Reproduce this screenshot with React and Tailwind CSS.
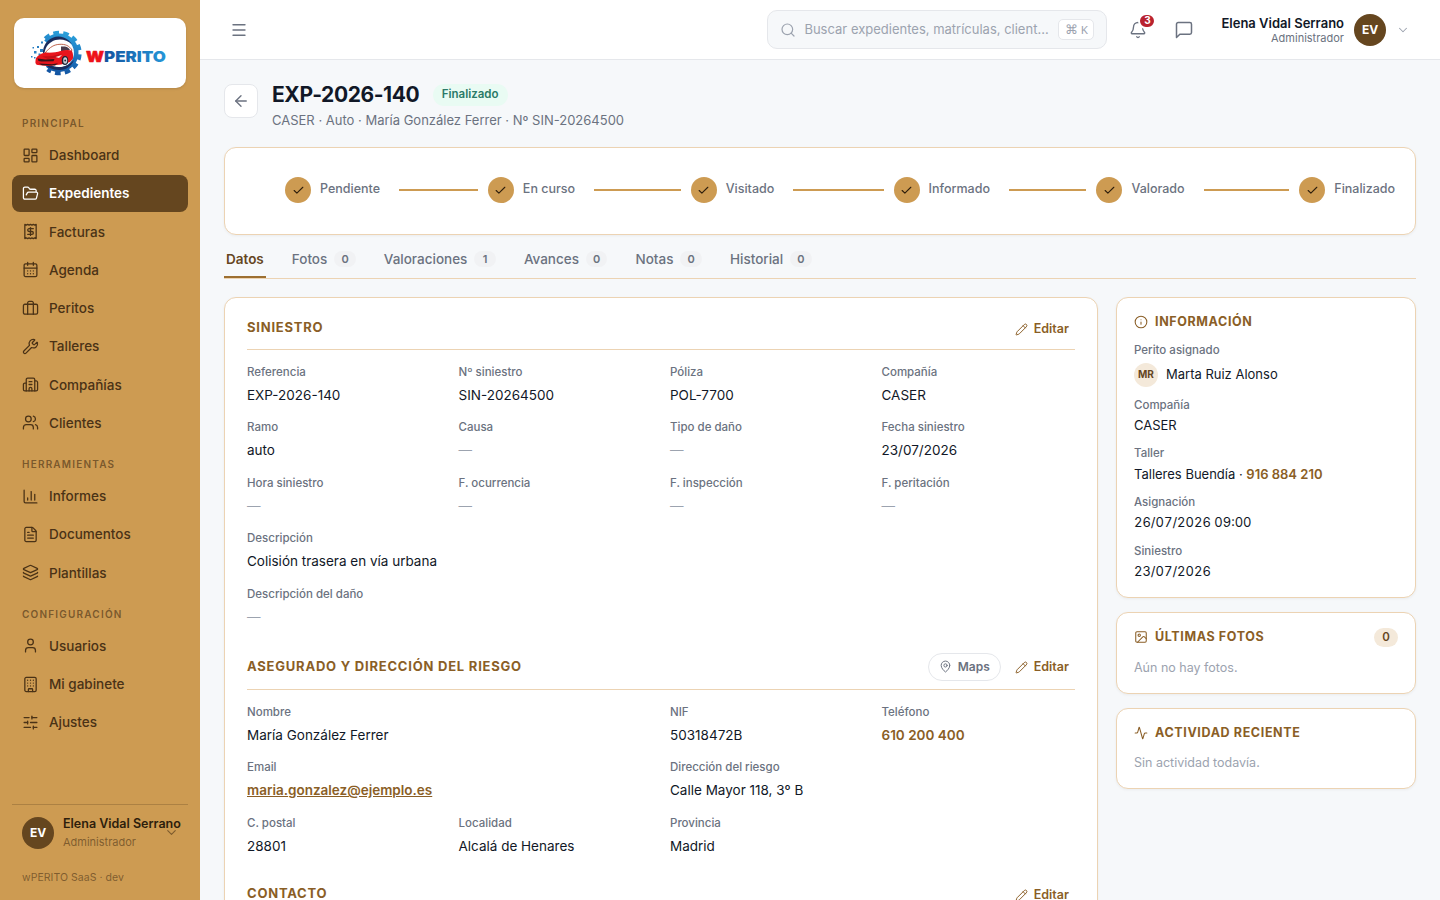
import {
  Activity,
  ArrowLeft,
  Bell,
  Briefcase,
  Building,
  Building2,
  CalendarDays,
  ChartColumn,
  Check,
  ChevronDown,
  FileText,
  FolderOpen,
  Image,
  Info,
  Layers,
  LayoutDashboard,
  MapPin,
  Menu,
  Pencil,
  Receipt,
  Search,
  SlidersHorizontal,
  User,
  Users,
  Wrench,
} from "lucide-react";

const menu = [
  {
    titulo: "Principal",
    items: [
      { label: "Dashboard", icon: LayoutDashboard },
      { label: "Expedientes", icon: FolderOpen, active: true },
      { label: "Facturas", icon: Receipt },
      { label: "Agenda", icon: CalendarDays },
      { label: "Peritos", icon: Briefcase },
      { label: "Talleres", icon: Wrench },
      { label: "Compañías", icon: Building2 },
      { label: "Clientes", icon: Users },
    ],
  },
  {
    titulo: "Herramientas",
    items: [
      { label: "Informes", icon: ChartColumn },
      { label: "Documentos", icon: FileText },
      { label: "Plantillas", icon: Layers },
    ],
  },
  {
    titulo: "Configuración",
    items: [
      { label: "Usuarios", icon: User },
      { label: "Mi gabinete", icon: Building },
      { label: "Ajustes", icon: SlidersHorizontal },
    ],
  },
];

const pasos = ["Pendiente", "En curso", "Visitado", "Informado", "Valorado", "Finalizado"];

const tabs = [
  { label: "Datos", active: true },
  { label: "Fotos", count: 0 },
  { label: "Valoraciones", count: 1 },
  { label: "Avances", count: 0 },
  { label: "Notas", count: 0 },
  { label: "Historial", count: 0 },
];

const siniestro = [
  { label: "Referencia", value: "EXP-2026-140" },
  { label: "Nº siniestro", value: "SIN-20264500" },
  { label: "Póliza", value: "POL-7700" },
  { label: "Compañía", value: "CASER" },
  { label: "Ramo", value: "auto" },
  { label: "Causa" },
  { label: "Tipo de daño" },
  { label: "Fecha siniestro", value: "23/07/2026" },
  { label: "Hora siniestro" },
  { label: "F. ocurrencia" },
  { label: "F. inspección" },
  { label: "F. peritación" },
  { label: "Descripción", value: "Colisión trasera en vía urbana", span: "col-span-4" },
  { label: "Descripción del daño", span: "col-span-4" },
];

const asegurado = [
  { label: "Nombre", value: "María González Ferrer", span: "col-span-2" },
  { label: "NIF", value: "50318472B" },
  { label: "Teléfono", value: "610 200 400", tipo: "tel" },
  { label: "Email", value: "maria.gonzalez@ejemplo.es", tipo: "email", span: "col-span-2" },
  { label: "Dirección del riesgo", value: "Calle Mayor 118, 3º B", span: "col-span-2" },
  { label: "C. postal", value: "28801" },
  { label: "Localidad", value: "Alcalá de Henares" },
  { label: "Provincia", value: "Madrid" },
];

function Logo() {
  return (
    <svg viewBox="0 0 172 70" className="h-[70px] w-[172px]">
      <defs>
        <linearGradient id="gear" gradientUnits="userSpaceOnUse" x1="40" y1="57" x2="52" y2="13">
          <stop offset="0" stopColor="#1152a0" />
          <stop offset="0.5" stopColor="#1d74bd" />
          <stop offset="1" stopColor="#2ba3dd" />
        </linearGradient>
        <linearGradient id="word" x1="0" y1="0" x2="1" y2="0">
          <stop offset="0" stopColor="#12529f" />
          <stop offset="1" stopColor="#2597d8" />
        </linearGradient>
      </defs>
      {/* engranaje: dientes, corona y filo interior */}
      <g fill="none" stroke="url(#gear)">
        <path d="M31.200 20.700A20.200 20.200 0 1 1 33.500 51.300" strokeWidth="4" strokeDasharray="5.600 4.100" />
        <path d="M32 24A17 17 0 1 1 33.500 47" strokeWidth="4.600" />
      </g>
      <path d="M29.500 38A15.500 15.500 0 0 1 58 26.500C50 18.500 36 20 31.500 31z" fill="#1b2c5c" />
      <path d="M29 44c4 5 9 8 16.500 8 7 0 12-4 14.500-10-4 4.500-9 7-15 7s-11-1.500-16-5z" fill="#1b2c5c" />
      <g fill="#2a7fc2">
        <rect x="23" y="28" width="2" height="2" />
        <rect x="18.500" y="29" width="1.500" height="1.500" />
        <rect x="20" y="33" width="2.500" height="2.500" />
        <rect x="26" y="31" width="3" height="3" />
        <rect x="17" y="38" width="1.500" height="1.500" />
        <rect x="27" y="23.500" width="2" height="2" />
        <rect x="24.500" y="35.500" width="2" height="2" />
        <rect x="20" y="39" width="1.500" height="1.500" />
      </g>
      {/* coche */}
      <path d="M31 35c5-6 9-8.500 15-8.700 5-.2 9 1.200 12 5.700l-3 5z" fill="#fff" stroke="#b5533a" strokeWidth="0.9" />
      <path d="M47 28.500h4c2.500.5 4 1.800 5 3.500l-9 1.500z" fill="#4a3b4a" />
      <path d="M21.500 43c0-4.500 4-7 10-8.500 5 .5 11 0 15-1.500 4-1 8-1.500 11-.5 1.500 2 1.800 4.500 1.500 8l-3 3.500-9 2.500-13 1.500-10-1c-2 0-3-2-2.500-4z" fill="#e8141c" />
      <path d="M28 38.500l11-.5 9-2.500-6 4-8 1.500z" fill="#c20f16" />
      <path d="M23.500 40.500l8 1 9-.5-1 2.200-12 .3-3-.5z" fill="#3a1418" />
      <path d="M25 45.500l13 .8 6-1-3 2.200-13-.2z" fill="#3a1418" />
      <path d="M41.500 39l6.500-2-3 3z" fill="#f7e9e6" />
      <ellipse cx="51" cy="42.500" rx="3.200" ry="4.600" fill="#1d2233" />
      <ellipse cx="51.200" cy="42.500" rx="2" ry="3.200" fill="#c9cdd6" />
      <circle cx="51.200" cy="42.500" r="0.900" fill="#1d2233" />
      <text
        x="72"
        y="43.500"
        fontFamily="Inter"
        fontWeight="900"
        fontSize="15"
        textLength="18"
        lengthAdjust="spacingAndGlyphs"
        fill="#ee1119"
        stroke="#ee1119"
        strokeWidth="0.6"
        strokeLinejoin="round"
      >
        W
      </text>
      <text
        x="90"
        y="43.500"
        fontFamily="Inter"
        fontWeight="900"
        fontSize="15"
        textLength="62"
        lengthAdjust="spacingAndGlyphs"
        fill="url(#word)"
      >
        PERITO
      </text>
    </svg>
  );
}

function Sidebar() {
  return (
    <aside className="flex w-[200px] shrink-0 flex-col bg-[#cd9b52] px-3 pt-[18px]">
      <div className="mx-0.5 h-[70px] shrink-0 overflow-hidden rounded-[10px] bg-white shadow-sm">
        <Logo />
      </div>
      <nav className="mt-3 flex flex-col">
        {menu.map((grupo) => (
          <div key={grupo.titulo}>
            <p className="px-2.5 pt-4 pb-1.5 text-[10px] leading-[15px] font-semibold tracking-[0.12em] text-[#4a3216]/65 uppercase">
              {grupo.titulo}
            </p>
            <div className="flex flex-col gap-0.5">
              {grupo.items.map((item) => (
                <a
                  key={item.label}
                  className={
                    item.active
                      ? "flex items-center gap-2.5 rounded-lg bg-[#65461f] px-2.5 py-2 text-[13.5px] leading-[1.5] font-semibold text-white"
                      : "flex items-center gap-2.5 rounded-lg px-2.5 py-2 text-[13.5px] leading-[1.5] font-medium text-[#4a3216]"
                  }
                >
                  <item.icon size={17} strokeWidth={1.8} />
                  {item.label}
                </a>
              ))}
            </div>
          </div>
        ))}
      </nav>
      <div className="mt-auto flex h-[58px] items-center border-t border-[#4a3216]/25 px-2.5 pb-0.5">
        <div className="flex size-8 shrink-0 items-center justify-center rounded-full bg-[#65461f] text-[12px] font-bold text-white">
          EV
        </div>
        <div className="ml-[9px] min-w-0 flex-1 whitespace-nowrap">
          <p className="text-[12.5px] leading-[18px] font-semibold text-[#2e1e0c]">Elena Vidal Serrano</p>
          <p className="text-[11px] leading-[18px] text-[#4a3216]/60">Administrador</p>
        </div>
        <ChevronDown size={15} strokeWidth={1.8} className="-mr-px shrink-0 text-[#4a3216]/60" />
      </div>
      <p className="mt-[7px] mb-[13px] px-2.5 text-[10.5px] leading-[18px] tracking-[0.005em] text-[#4a3216]/60">
        wPERITO SaaS · dev
      </p>
    </aside>
  );
}

function Topbar() {
  return (
    <header className="flex h-[60px] shrink-0 items-center border-b border-[#e5e7eb] bg-white pr-[30px] pl-[30px]">
      <Menu size={18} strokeWidth={1.8} className="text-[#6b7280]" />
      <div className="ml-auto flex h-[39px] w-[340px] items-center rounded-[10px] border border-[#e5e7eb] bg-[#f6f8fa] pr-3 pl-3">
        <Search size={16} strokeWidth={1.8} className="text-[#9ca3af]" />
        <span className="ml-2 flex-1 text-[13px] whitespace-nowrap text-[#9ca3af]">
          Buscar expedientes, matrículas, client…
        </span>
        <kbd className="flex h-[21px] w-9 items-center justify-center gap-[3px] rounded-[5px] border border-[#e5e7eb] bg-white font-sans text-[11.5px] text-[#9ca3af]">
          <span className="text-[13px]">⌘</span>
          <span>K</span>
        </kbd>
      </div>
      <div className="relative ml-[22px] text-[#6b7280]">
        <Bell size={18} strokeWidth={1.8} />
        <span className="absolute -top-[8px] left-[9px] flex h-4 w-[18px] items-center justify-center rounded-full border-2 border-white bg-[#b9222f] text-[10px] font-bold text-white">
          3
        </span>
      </div>
      <svg
        className="ml-[27px] size-5 text-[#6b7280]"
        viewBox="0 0 24 24"
        fill="none"
        stroke="currentColor"
        strokeWidth="1.8"
        strokeLinecap="round"
        strokeLinejoin="round"
      >
        <path d="M21 15a2 2 0 0 1-2 2H7l-4 4V5a2 2 0 0 1 2-2h14a2 2 0 0 1 2 2z" />
      </svg>
      <div className="ml-[27px] pt-0.5 text-right">
        <p className="text-[13px] leading-[15px] font-semibold text-[#111827]">Elena Vidal Serrano</p>
        <p className="text-[11px] leading-[15px] text-[#6b7280]">Administrador</p>
      </div>
      <div className="ml-2.5 flex size-8 items-center justify-center rounded-full bg-[#65461f] text-[12px] font-bold text-white">
        EV
      </div>
      <ChevronDown size={14} strokeWidth={1.8} className="ml-2.5 text-[#9ca3af]" />
    </header>
  );
}

function Valor({ value, tipo }) {
  if (!value) return <p className="text-[13.5px] leading-[1.5] text-[#9ca3af]">—</p>;
  if (tipo === "tel") return <p className="text-[13.5px] leading-[1.5] font-semibold text-[#8a5e26]">{value}</p>;
  if (tipo === "email")
    return <p className="text-[13.5px] leading-[1.5] font-semibold text-[#8a5e26] underline">{value}</p>;
  return <p className="text-[13.5px] leading-[1.5] text-[#111827]">{value}</p>;
}

function Seccion({ titulo, maps, campos }) {
  return (
    <section>
      <div className="flex items-center justify-between border-b border-[#ecd3b3] pb-2">
        <h2 className="pb-[0.5px] text-[13px] leading-[1.5] font-bold tracking-[0.06em] text-[#8a5e26] uppercase">
          {titulo}
        </h2>
        <div className="flex items-center gap-2">
          {maps && (
            <button className="flex h-7 items-center gap-1.5 rounded-full border border-[#e5e7eb] px-2.5 text-[12px] font-semibold text-[#6b7280]">
              <MapPin size={13} strokeWidth={1.8} />
              Maps
            </button>
          )}
          <button className="flex items-center gap-1.5 px-1.5 pt-1 pb-0.5 text-[12.5px] leading-[1.5] font-semibold text-[#8a5e26]">
            <Pencil size={13} strokeWidth={1.8} />
            Editar
          </button>
        </div>
      </div>
      <div className="mt-[13.75px] grid grid-cols-4 gap-x-[18px] gap-y-3.5">
        {campos.map((campo) => (
          <div key={campo.label} className={campo.span}>
            <p className="mb-1 text-[11.5px] leading-[1.5] font-medium text-[#6b7280]">{campo.label}</p>
            <Valor value={campo.value} tipo={campo.tipo} />
          </div>
        ))}
      </div>
    </section>
  );
}

function Dato({ label, children }) {
  return (
    <div>
      <p className="mb-0.5 text-[11.5px] leading-[1.5] font-medium text-[#6b7280]">{label}</p>
      <div className="text-[13px] leading-[1.5] text-[#111827]">{children}</div>
    </div>
  );
}

function Tarjeta({ icon: Icono, titulo, count, children }) {
  return (
    <div className="rounded-xl border border-[#ecd3b3] bg-white px-[17px] py-[15px] shadow-[0_1px_3px_rgba(0,0,0,0.05)]">
      <div className="flex min-h-[18px] items-center text-[#8a5e26]">
        <Icono size={14} strokeWidth={1.8} />
        <h3 className="ml-[7px] text-[12.5px] leading-[18px] font-bold tracking-[0.05em] uppercase">{titulo}</h3>
        {count !== undefined && (
          <span className="ml-auto flex h-[19px] w-6 items-center justify-center rounded-full bg-[#f4e9da] text-[11.5px] font-semibold text-[#65461f]">
            {count}
          </span>
        )}
      </div>
      {children}
    </div>
  );
}

export default function App() {
  return (
    <div className="flex h-[900px] w-[1440px] overflow-hidden bg-[#f6f8fa] font-[Inter,sans-serif]">
      <Sidebar />
      <div className="flex min-w-0 flex-1 flex-col">
        <Topbar />
        <main className="min-h-0 flex-1 overflow-hidden px-6 pt-[22px]">
          {/* Cabecera del expediente */}
          <div className="flex items-start gap-3.5">
            <button className="mt-0.5 flex size-[34px] items-center justify-center rounded-lg border border-[#e5e7eb] bg-white text-[#6b7280]">
              <ArrowLeft size={18} strokeWidth={1.8} />
            </button>
            <div>
              <div className="flex h-[26px] items-center gap-[13.5px] pb-px">
                <h1 className="text-[21px] leading-[26px] font-bold tracking-[-0.02em] text-[#111827]">EXP-2026-140</h1>
                <span className="rounded-full bg-[#e9fbf3] px-[9px] pb-px text-[11.5px] leading-[21px] font-semibold text-[#2b7a68]">
                  Finalizado
                </span>
              </div>
              <p className="mt-[2px] text-[13px] leading-5 text-[#6b7280]">
                CASER · Auto · María González Ferrer · Nº SIN-20264500
              </p>
            </div>
          </div>

          {/* Estados */}
          <div className="mt-[17px] flex h-[88px] items-center rounded-xl border border-[#ecd3b3] bg-white pr-5 pb-0.5 pl-[60px] shadow-[0_1px_3px_rgba(0,0,0,0.05)]">
            {pasos.map((paso, i) => (
              <div
                key={paso}
                className={i < pasos.length - 1 ? "flex w-[202.87px] shrink-0 items-center" : "flex items-center"}
              >
                <span className="flex size-[26px] shrink-0 items-center justify-center rounded-full bg-[#cd9b52] text-[#2e1e0c]">
                  <Check size={13} strokeWidth={2} />
                </span>
                <span className="ml-[9px] pb-0.5 text-[12.5px] font-medium whitespace-nowrap text-[#6b7280]">{paso}</span>
                {i < pasos.length - 1 && <span className="mr-2.5 ml-[19px] h-0.5 flex-1 bg-[#cd9b52]" />}
              </div>
            ))}
          </div>

          {/* Pestañas */}
          <div className="mt-1 flex h-10 gap-6 border-b border-[#ecd3b3]">
            {tabs.map((tab) => (
              <div
                key={tab.label}
                className={
                  tab.active
                    ? "flex items-center border-b-2 border-[#9c6f31] px-0.5 pt-[3px] text-[13.5px] font-semibold text-[#65461f]"
                    : "flex items-center border-b-2 border-transparent px-0.5 pt-[3px] text-[13.5px] font-medium text-[#6b7280]"
                }
              >
                {tab.label}
                {tab.count !== undefined && (
                  <span className="ml-[7px] flex h-4 w-[21.5px] items-center justify-center rounded-full bg-[#f1f2f4] text-[11px] font-semibold">
                    {tab.count}
                  </span>
                )}
              </div>
            ))}
          </div>

          <div className="mt-[18px] flex items-start gap-[18px]">
            <div className="flex h-[900px] flex-1 flex-col gap-[25.75px] rounded-xl border border-[#ecd3b3] bg-white px-[22px] pt-[18px] shadow-[0_1px_3px_rgba(0,0,0,0.05)]">
              <Seccion titulo="Siniestro" campos={siniestro} />
              <Seccion titulo="Asegurado y dirección del riesgo" maps campos={asegurado} />
              <Seccion titulo="Contacto" campos={[]} />
            </div>

            <div className="flex w-[300px] shrink-0 flex-col gap-3.5">
              <Tarjeta icon={Info} titulo="Información">
                <div className="mt-[11.25px] mb-[0.25px] flex flex-col gap-2.5">
                  <Dato label="Perito asignado">
                    <span className="mt-[3px] flex h-6 items-center gap-2">
                      <span className="flex size-6 items-center justify-center rounded-full bg-[#f4e9da] text-[10px] font-bold text-[#65461f]">
                        MR
                      </span>
                      Marta Ruiz Alonso
                    </span>
                  </Dato>
                  <Dato label="Compañía">CASER</Dato>
                  <Dato label="Taller">
                    Talleres Buendía · <span className="font-semibold text-[#8a5e26]">916 884 210</span>
                  </Dato>
                  <Dato label="Asignación">
                    <span className="tabular-nums">26/07/2026 09:00</span>
                  </Dato>
                  <Dato label="Siniestro">
                    <span className="tabular-nums">23/07/2026</span>
                  </Dato>
                </div>
              </Tarjeta>
              <Tarjeta icon={Image} titulo="Últimas fotos" count={0}>
                <p className="mt-[11px] pb-px text-[12.5px] leading-[19px] text-[#9ca3af]">Aún no hay fotos.</p>
              </Tarjeta>
              <Tarjeta icon={Activity} titulo="Actividad reciente">
                <p className="mt-[11px] pb-px text-[12.5px] leading-[19px] text-[#9ca3af]">Sin actividad todavía.</p>
              </Tarjeta>
            </div>
          </div>
        </main>
      </div>
    </div>
  );
}
